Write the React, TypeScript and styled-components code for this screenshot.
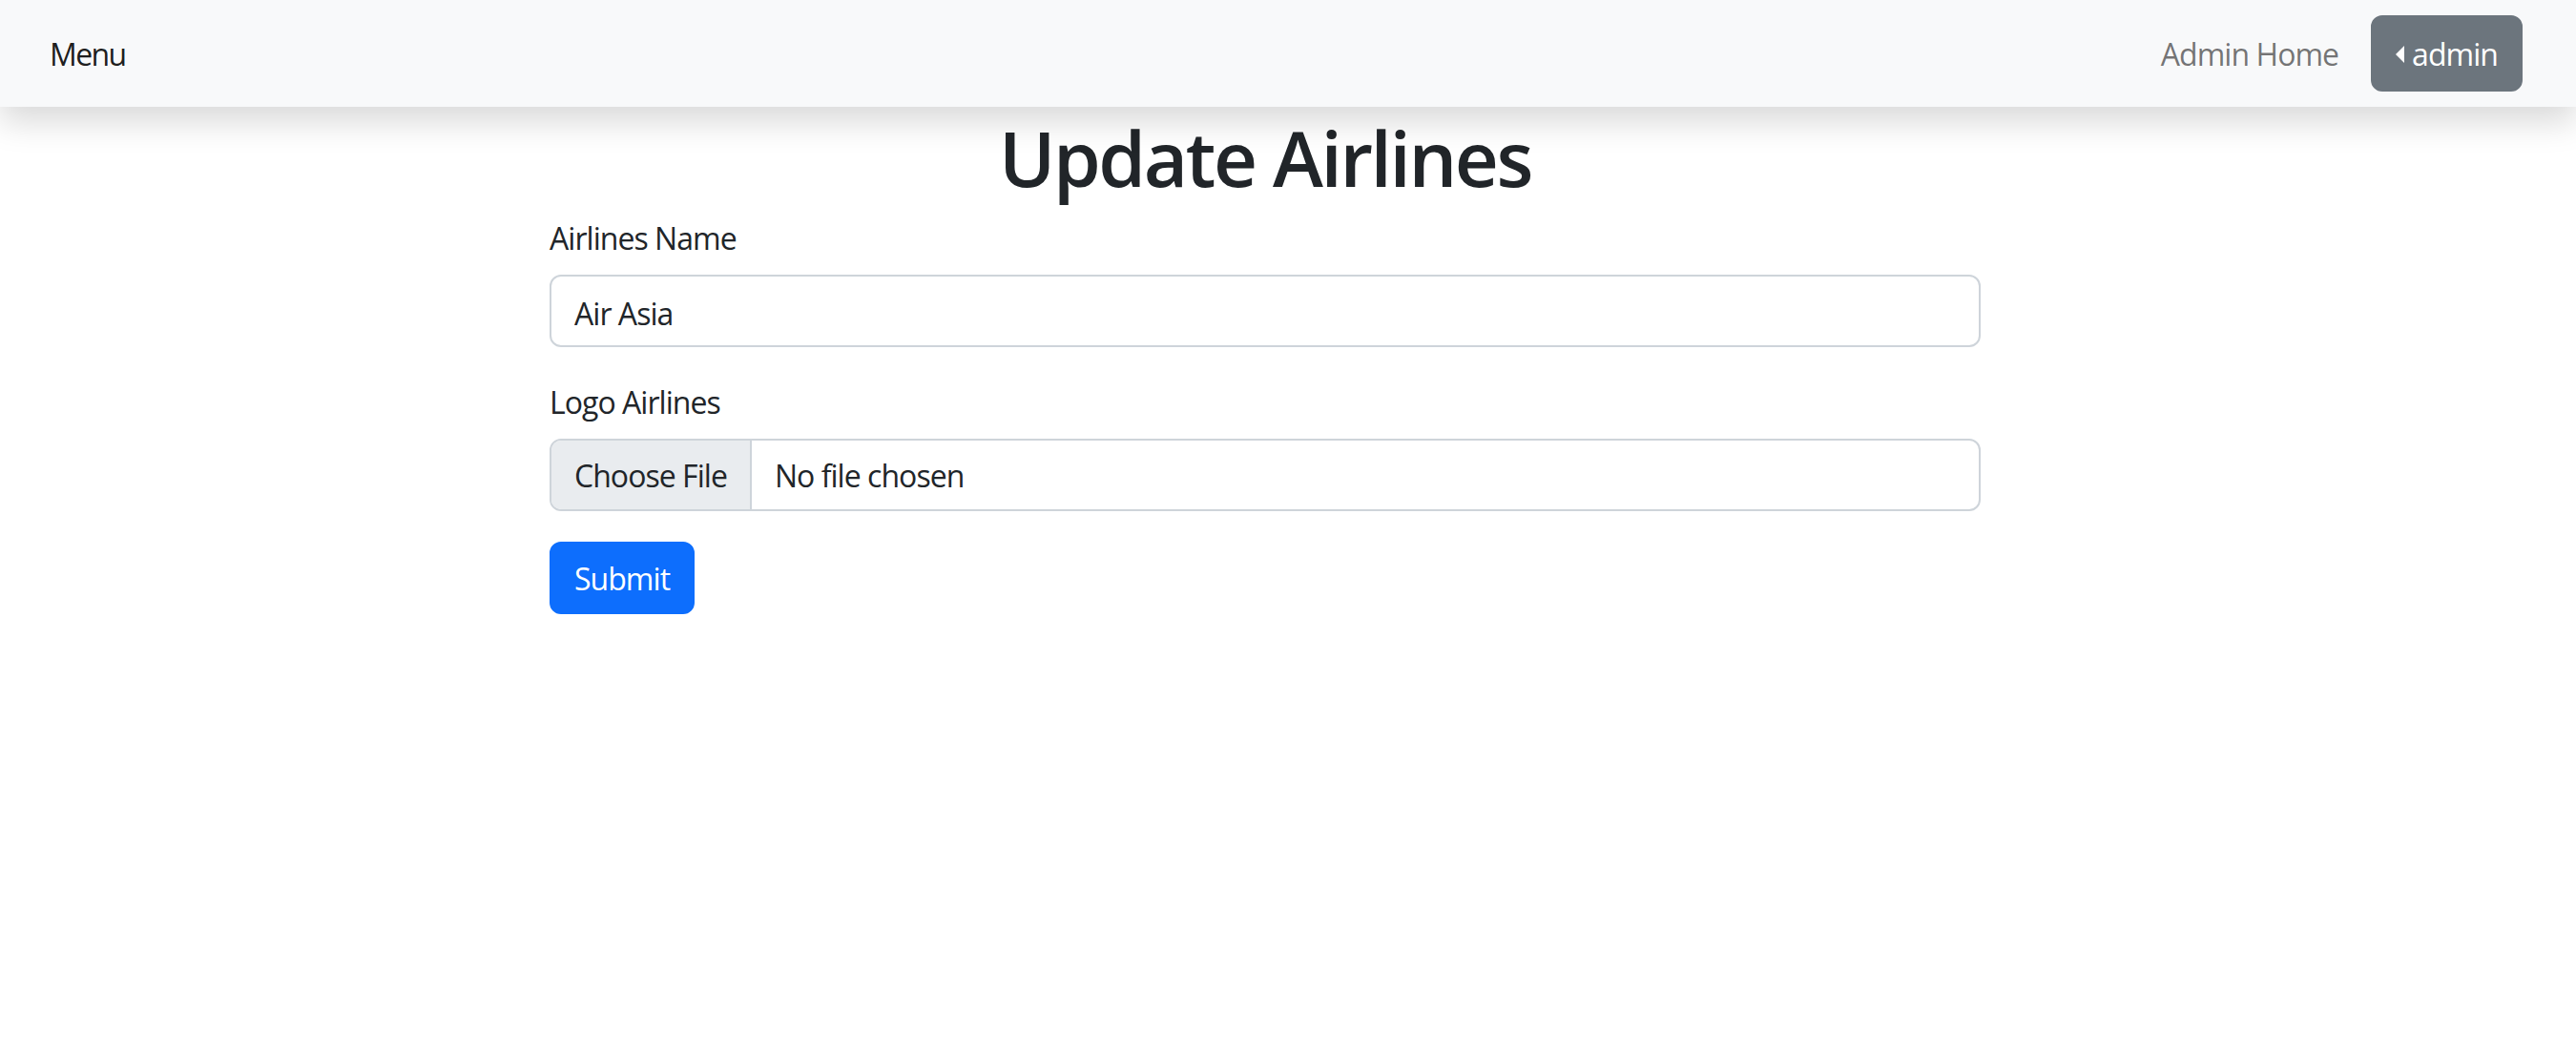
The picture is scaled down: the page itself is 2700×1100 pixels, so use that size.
import styled, { createGlobalStyle } from "styled-components"

const GlobalStyle = createGlobalStyle`
    html, body {
        margin: 0;
        padding: 0;
        background: #ffffff;
    }
    body {
        font-family: "Open Sans", "Segoe UI", "Liberation Sans", sans-serif;
        font-size: 32px;
        line-height: 1.5;
        color: #212529;
        letter-spacing: -0.03em;
    }
    * {
        box-sizing: border-box;
    }
`

const Navbar = styled.nav`
    display: flex;
    align-items: center;
    justify-content: space-between;
    height: 112px;
    padding: 0 56px 0 52px;
    background: #f8f9fa;
    box-shadow: 0 16px 32px rgba(0, 0, 0, 0.15);
    position: relative;
    z-index: 1;
`

const Brand = styled.a`
    color: rgba(0, 0, 0, 0.9);
    text-decoration: none;
    font-size: 32px;
    line-height: 48px;
    letter-spacing: -0.05em;
    padding-top: 2px;
`

const NavRight = styled.div`
    display: flex;
    align-items: center;
    gap: 34px;
`

const NavLink = styled.a`
    color: rgba(0, 0, 0, 0.55);
    text-decoration: none;
    line-height: 48px;
    padding-top: 2px;
`

const DropBtn = styled.button`
    display: flex;
    align-items: center;
    height: 80px;
    padding: 2px 24px 0;
    border: 2px solid #6c757d;
    border-radius: 12px;
    background: #6c757d;
    color: #ffffff;
    font: inherit;
    letter-spacing: inherit;
    cursor: pointer;

    &::before {
        content: "";
        display: inline-block;
        margin-right: 8px;
        border-top: 9.6px solid transparent;
        border-right: 9.6px solid #ffffff;
        border-bottom: 9.6px solid transparent;
    }
`

const Page = styled.main`
    padding-right: 48px;
`

const Content = styled.div`
    width: 1500px;
    margin: 0 auto;
`

const Title = styled.h1`
    margin: 0 0 11px;
    padding-top: 5px;
    text-align: center;
    font-size: 80px;
    font-weight: 600;
    line-height: 96px;
    letter-spacing: -0.03em;
    color: #212529;
`

const Group = styled.div`
    margin-bottom: 32px;
`

const Label = styled.label`
    display: block;
    margin-bottom: 16px;
    line-height: 48px;
    padding-top: 2px;
    height: 48px;
`

const TextInput = styled.input`
    display: block;
    width: 100%;
    height: 76px;
    padding: 14px 24px 10px;
    border: 2px solid #ced4da;
    border-radius: 12px;
    background: #ffffff;
    color: #212529;
    font: inherit;
    letter-spacing: inherit;
    outline: none;
`

const FileBox = styled.div`
    display: flex;
    align-items: stretch;
    height: 76px;
    border: 2px solid #ced4da;
    border-radius: 12px;
    overflow: hidden;
    background: #ffffff;
`

const FileButton = styled.span`
    display: flex;
    align-items: center;
    padding: 2px 24px 0;
    background: #e9ecef;
    border-right: 2px solid #ced4da;
    color: #212529;
`

const FileName = styled.span`
    display: flex;
    align-items: center;
    padding: 2px 24px 0;
    color: #212529;
`

const SubmitBtn = styled.button`
    height: 76px;
    padding: 2px 24px 0;
    border: 2px solid #0d6efd;
    border-radius: 12px;
    background: #0d6efd;
    color: #ffffff;
    font: inherit;
    letter-spacing: inherit;
    cursor: pointer;
`

const App = () => {
    return (
        <>
            <GlobalStyle />
            <Navbar>
                <Brand href="#">Menu</Brand>
                <NavRight>
                    <NavLink href="#">Admin Home</NavLink>
                    <DropBtn type="button">admin</DropBtn>
                </NavRight>
            </Navbar>
            <Page>
                <Content>
                    <Title>Update Airlines</Title>
                    <form onSubmit={(e) => e.preventDefault()}>
                        <Group>
                            <Label htmlFor="name">Airlines Name</Label>
                            <TextInput id="name" type="text" defaultValue="Air Asia" />
                        </Group>
                        <Group>
                            <Label>Logo Airlines</Label>
                            <FileBox>
                                <FileButton>Choose File</FileButton>
                                <FileName>No file chosen</FileName>
                            </FileBox>
                        </Group>
                        <SubmitBtn type="submit">Submit</SubmitBtn>
                    </form>
                </Content>
            </Page>
        </>
    )
}
export default App
